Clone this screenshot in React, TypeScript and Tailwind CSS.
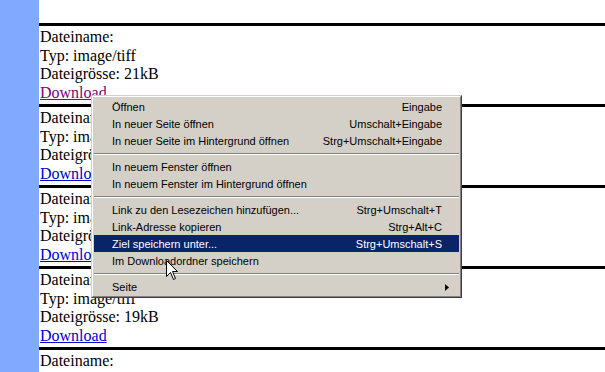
import React from 'react';

type Block = { name: string; type: string; size: string; visited?: boolean };

const blocks: Block[] = [
  { name: 'Dateiname:', type: 'Typ: image/tiff', size: 'Dateigrösse: 21kB', visited: true },
  { name: 'Dateiname:', type: 'Typ: image/tiff', size: 'Dateigrösse: 20kB' },
  { name: 'Dateiname:', type: 'Typ: image/tiff', size: 'Dateigrösse: 22kB' },
  { name: 'Dateiname:', type: 'Typ: image/tiff', size: 'Dateigrösse: 19kB' },
];

type Item = { label: string; shortcut?: string; active?: boolean; submenu?: boolean } | 'sep';

const menu: Item[] = [
  { label: 'Öffnen', shortcut: 'Eingabe' },
  { label: 'In neuer Seite öffnen', shortcut: 'Umschalt+Eingabe' },
  { label: 'In neuer Seite im Hintergrund öffnen', shortcut: 'Strg+Umschalt+Eingabe' },
  'sep',
  { label: 'In neuem Fenster öffnen' },
  { label: 'In neuem Fenster im Hintergrund öffnen' },
  'sep',
  { label: 'Link zu den Lesezeichen hinzufügen...', shortcut: 'Strg+Umschalt+T' },
  { label: 'Link-Adresse kopieren', shortcut: 'Strg+Alt+C' },
  { label: 'Ziel speichern unter...', shortcut: 'Strg+Umschalt+S', active: true },
  { label: 'Im Downloadordner speichern' },
  'sep',
  { label: 'Seite', submenu: true },
];

function Rule() {
  return <div className="my-[2px] h-[3px] bg-black" />;
}

function ContextMenu() {
  return (
    <div className="absolute left-[91px] top-[95px] w-[371px] border border-t-[#d4d0c8] border-l-[#d4d0c8] border-r-[#404040] border-b-[#404040] bg-[#d4d0c8]">
      <div className="border border-t-white border-l-white border-r-[#808080] border-b-[#808080] p-px text-[11px] leading-[17px] text-black [font-family:'Liberation_Sans',Arial,sans-serif]">
        {menu.map((it, i) =>
          it === 'sep' ? (
            <div key={i} className="flex h-[9px] flex-col justify-center">
              <div className="h-px bg-[#808080]" />
              <div className="h-px bg-white" />
            </div>
          ) : (
            <div
              key={i}
              className={
                'flex h-[17px] items-center justify-between pt-px pl-[18px] pr-[17px] ' +
                (it.active ? 'bg-[#0a246a] text-white' : '')
              }
            >
              <span>{it.label}</span>
              {it.shortcut && <span>{it.shortcut}</span>}
              {it.submenu && (
                <svg width="4" height="7" viewBox="0 0 4 7" className="mr-[-7px]">
                  <path d="M0 0 L4 3.5 L0 7 Z" fill="black" />
                </svg>
              )}
            </div>
          )
        )}
      </div>
    </div>
  );
}

function Cursor() {
  return (
    <svg className="absolute left-[166px] top-[260px]" width="13" height="21" viewBox="0 0 13 21">
      <path
        d="M0.5 0.5 L0.5 16.5 L4.5 12.5 L7.5 19.5 L9.5 18.5 L6.5 11.5 L11.5 11.5 Z"
        fill="white"
        stroke="black"
        strokeWidth="1"
        strokeLinejoin="miter"
      />
    </svg>
  );
}

export default function App() {
  return (
    <div className="relative flex h-[372px] w-[605px] overflow-hidden bg-white">
      <div className="w-[39px] shrink-0 bg-[#80a9ff]" />
      <div className="flex-1 pt-[21px] text-[16px] leading-[18.5px] text-black [font-family:'Liberation_Serif','Times_New_Roman',serif]">
        {blocks.map((b, i) => (
          <div key={i}>
            <Rule />
            <div className="pl-px">
              <div>{b.name}</div>
              <div>{b.type}</div>
              <div>{b.size}</div>
              <div>
                <a href="#" className={'underline ' + (b.visited ? 'text-[#800080]' : 'text-[#0000cc]')}>
                  Download
                </a>
              </div>
            </div>
          </div>
        ))}
        <Rule />
        <div className="pl-px">Dateiname:</div>
      </div>
      <ContextMenu />
      <Cursor />
    </div>
  );
}
